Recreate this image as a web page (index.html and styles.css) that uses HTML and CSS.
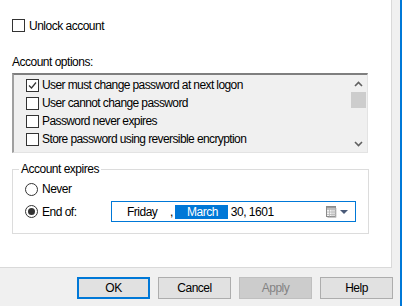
FILE: index.html
```html
<!DOCTYPE html>
<html lang="en">
<head>
  <meta charset="UTF-8">
  <title>Account</title>
  <link rel="stylesheet" href="styles.css">
</head>
<body>
  <div class="window">
    <div class="dialog">
      <div class="page">
        <div class="check-row">
          <span class="box"></span>
          <span>Unlock account</span>
        </div>

        <div class="section-label">Account options:</div>
        <div class="listbox">
          <ul class="options">
            <li><span class="box checked">
              <svg width="11" height="11" viewBox="0 0 11 11"><path d="M2 5.5 L4.5 8 L9 2.5" fill="none" stroke="#333" stroke-width="1.2"/></svg>
            </span>User must change password at next logon</li>
            <li><span class="box"></span>User cannot change password</li>
            <li><span class="box"></span>Password never expires</li>
            <li><span class="box"></span>Store password using reversible encryption</li>
          </ul>
          <div class="scrollbar">
            <div class="arrow">
              <svg width="9" height="6" viewBox="0 0 9 6"><path d="M1 5 L4.5 1.5 L8 5" fill="none" stroke="#606060" stroke-width="1.6"/></svg>
            </div>
            <div class="track"><div class="thumb"></div></div>
            <div class="arrow">
              <svg width="9" height="6" viewBox="0 0 9 6"><path d="M1 1 L4.5 4.5 L8 1" fill="none" stroke="#606060" stroke-width="1.6"/></svg>
            </div>
          </div>
        </div>

        <fieldset class="group">
          <legend>Account expires</legend>
          <div class="radio-row">
            <span class="radio"></span>
            <span>Never</span>
          </div>
          <div class="radio-row">
            <div class="radio-label">
              <span class="radio on"><span class="dot"></span></span>
              <span>End of:</span>
            </div>
            <div class="picker">
              <span class="day">Friday</span>
              <span class="comma">,</span>
              <span class="month">March</span>
              <span class="rest">30, 1601</span>
              <svg class="cal" width="11" height="12" viewBox="0 0 11 12">
                <rect x="0.5" y="0.5" width="9" height="10" fill="#f4f4f4" stroke="#8a8a8a"/>
                <path d="M1 3.5 H9.5 M1 6 H9.5 M1 8.5 H9.5 M3.5 3 V10.5 M6 3 V10.5 M8 3 V10.5" stroke="#b8b8b8" stroke-width="0.8"/>
                <rect x="1" y="1" width="8.5" height="1.6" fill="#9a9a9a"/>
                <path d="M10 2 V11.5 H1.5" fill="none" stroke="#c8c8c8"/>
              </svg>
              <svg class="drop" width="8" height="4" viewBox="0 0 8 4"><path d="M0 0 H8 L4 4 Z" fill="#4a5a78"/></svg>
            </div>
          </div>
        </fieldset>
      </div>

      <div class="buttons">
        <button class="btn default">OK</button>
        <button class="btn">Cancel</button>
        <button class="btn" disabled>Apply</button>
        <button class="btn">Help</button>
      </div>
    </div>
  </div>
</body>
</html>
```

FILE: styles.css
```css
body {
  margin: 0;
  background: #ffffff;
  font-family: 'Liberation Sans', Arial, sans-serif;
  font-size: 12px;
  letter-spacing: -0.5px;
  color: #000;
}

.window {
  display: flex;
  width: 406px;
  height: 306px;
}

.dialog {
  width: 400px;
  background: #f0f0f0;
  border-right: 2px solid #0078d7;
  display: flex;
  flex-direction: column;
}

.page {
  box-sizing: border-box;
  width: 392px;
  height: 268px;
  background: #fff;
  border-right: 1px solid #d9d9d9;
  border-bottom: 1px solid #d9d9d9;
  padding: 19px 0 0 12px;
}

.check-row {
  display: flex;
  align-items: center;
  gap: 4px;
  height: 13px;
  line-height: 14px;
}

.box {
  box-sizing: border-box;
  width: 13px;
  height: 13px;
  border: 1px solid #333;
  background: #fff;
  display: flex;
  align-items: center;
  justify-content: center;
  flex-shrink: 0;
}

.section-label {
  margin-top: 23px;
  line-height: 14px;
}

.listbox {
  box-sizing: border-box;
  margin-top: 4px;
  width: 356px;
  height: 80px;
  display: flex;
  background: #f0f0f0;
  border: 1px solid #e3e3e3;
  border-top: 2px solid #7f7f7f;
  border-left: 2px solid #a0a0a0;
}

.options {
  flex: 1;
  list-style: none;
  margin: 0;
  padding: 1px 0 0 12px;
  letter-spacing: -0.6px;
}

.options li {
  height: 18px;
  display: flex;
  align-items: center;
  gap: 3px;
}

.scrollbar {
  width: 17px;
  display: flex;
  flex-direction: column;
}

.arrow {
  height: 17px;
  display: flex;
  align-items: center;
  justify-content: center;
}

.track {
  flex: 1;
  padding: 0 1px;
}

.thumb {
  height: 16px;
  background: #cdcdcd;
}

.group {
  box-sizing: border-box;
  width: 356px;
  margin: 9px 0 0 0;
  padding: 6px 12px 11px 12px;
  border: 1px solid #dcdcdc;
}

.group legend {
  margin-left: -6px;
  padding: 0 2px;
  line-height: 14px;
}

.radio-row {
  display: flex;
  align-items: center;
  gap: 4px;
  line-height: 14px;
  min-height: 13px;
}

.radio-row + .radio-row {
  margin-top: 5px;
}

.radio-label {
  width: 86px;
  display: flex;
  align-items: center;
  gap: 4px;
}

.radio {
  box-sizing: border-box;
  width: 13px;
  height: 13px;
  border: 1px solid #333;
  border-radius: 50%;
  background: #fff;
  display: flex;
  align-items: center;
  justify-content: center;
}

.radio .dot {
  width: 7px;
  height: 7px;
  border-radius: 50%;
  background: #333;
}

.picker {
  box-sizing: border-box;
  width: 245px;
  height: 21px;
  margin-left: -4px;
  border: 1px solid #0078d7;
  background: #fff;
  display: flex;
  align-items: center;
  padding: 0 7px 0 15px;
}

.day { width: 43px; }
.comma { width: 5px; }

.month {
  background: #0078d7;
  color: #fff;
  line-height: 14px;
  padding: 0 10px 0 12px;
}

.rest { margin-left: 3px; }

.cal { margin-left: auto; }
.drop { margin-left: 3px; }

.buttons {
  display: flex;
  justify-content: flex-end;
  gap: 8px;
  padding: 9px 7px 0 0;
}

.btn {
  box-sizing: border-box;
  width: 73px;
  height: 22px;
  padding: 0;
  font-family: inherit;
  font-size: 12px;
  letter-spacing: -0.5px;
  color: #000;
  background: #e1e1e1;
  border: 1px solid #adadad;
}

.btn.default { border: 2px solid #0078d7; }

.btn:disabled {
  background: #cccccc;
  border-color: #bfbfbf;
  color: #838383;
}
```
